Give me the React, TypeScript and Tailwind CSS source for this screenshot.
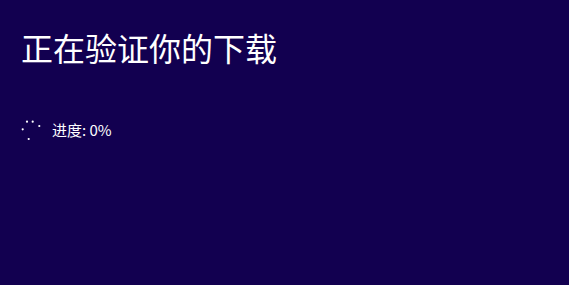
import React from "react"

const dots = [
  { x: 22.7, y: 129.3 },
  { x: 27, y: 121.7 },
  { x: 32.7, y: 121.7 },
  { x: 39.3, y: 126 },
  { x: 28.7, y: 139 },
]

function Spinner() {
  // dots ring, origin at (20,118) of page
  return (
    <svg width="24" height="24" viewBox="20 118 24 24" className="shrink-0">
      {dots.map((d, i) => (
        <circle key={i} cx={d.x} cy={d.y} r="1.1" fill="#ffffff" />
      ))}
    </svg>
  )
}

export default function App() {
  return (
    <div
      className="w-[569px] h-[285px] bg-[#120050] text-white overflow-hidden"
      style={{ fontFamily: '"Noto Sans CJK SC", "Noto Sans", sans-serif' }}
    >
      <h1 className="pl-[21px] pt-[29px] text-[32px] leading-[36px] font-normal">
        正在验证你的下载
      </h1>
      <div className="mt-[53px] flex items-center pl-[20px]">
        <Spinner />
        <span className="ml-[8px] text-[15px] leading-[22px]">进度: 0%</span>
      </div>
    </div>
  )
}
